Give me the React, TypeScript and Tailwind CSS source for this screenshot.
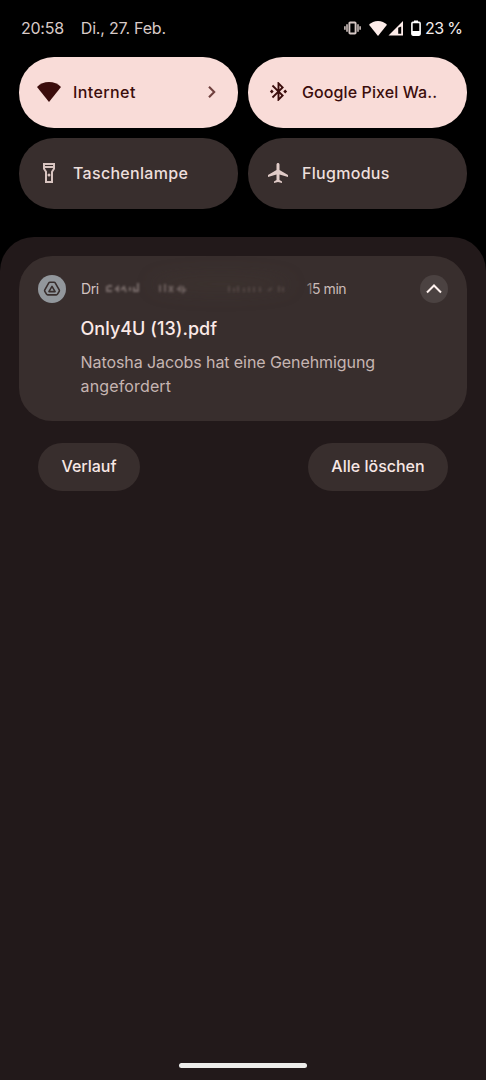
import type { ReactNode } from 'react';
import { MdAirplanemodeActive, MdBluetoothConnected, MdOutlineFlashlightOn } from 'react-icons/md';

function WifiIcon({ className }: { className?: string }) {
    return (
        <svg viewBox="0 0 24 20" className={className} fill="currentColor">
            <path d="M12 0C7.3 0 3.1 1.9 0 4.9L12 20 24 4.9C20.9 1.9 16.7 0 12 0z" />
        </svg>
    );
}

function StatusIcons() {
    return (
        <div className="flex items-center text-[#fdece9]">
            {/* vibrate */}
            <svg width="17" height="14" viewBox="0 0 17 14" fill="none" stroke="#d6c8c5" strokeWidth="1.5">
                <rect x="5.4" y="1.5" width="6.2" height="11" rx="0.8" strokeWidth="1.9" />
                <path d="M3 3.2v7.6M14 3.2v7.6M0.9 5.2v3.6M16.1 5.2v3.6" />
            </svg>
            <WifiIcon className="ml-[8px] h-[15px] w-[18px]" />
            {/* mobile signal */}
            <svg width="16" height="15" viewBox="0 0 16 15" className="ml-[1px]">
                <path d="M0.5 14.5L15 0V14.5z" fill="currentColor" />
                <path d="M10.2 6.8l3-1.4v7.3h-3z" fill="#000" />
            </svg>
            {/* battery */}
            <svg width="10" height="16" viewBox="0 0 10 16" className="ml-[7px]">
                <path d="M3 0.5h4v2H3z" fill="#fff" />
                <rect x="0.9" y="2.4" width="8.2" height="12.7" rx="1" fill="none" stroke="#fff" strokeWidth="1.6" />
                <path d="M1 11h8v4H1z" fill="#fff" />
            </svg>
            <span className="ml-[4px] w-[37px] text-[16px] leading-5 tracking-[-0.6px] whitespace-nowrap text-[#f5eeec]">23 %</span>
        </div>
    );
}

interface TileProps {
    icon: ReactNode;
    label: string;
    labelClass: string;
    active?: boolean;
    arrow?: boolean;
}

function Tile({ icon, label, labelClass, active, arrow }: TileProps) {
    return (
        <div className={`flex h-[71px] items-center rounded-[35px] pr-[21px] pb-px pl-[19px] ${active ? 'bg-[#f9dcd8] text-[#3b0d0c]' : 'bg-[#382e2d] text-[#eddfdc]'}`}>
            <span className="-ml-px flex w-6 justify-center pb-px">{icon}</span>
            <span className={`ml-[12px] flex-1 pb-px text-[16px] leading-5 font-medium whitespace-nowrap ${labelClass}`}>{label}</span>
            {arrow && (
                <svg width="10" height="14" viewBox="0 0 10 14" fill="none" stroke="#70413f" strokeWidth="2.1">
                    <path d="M2 1.8L7.2 7 2 12.2" />
                </svg>
            )}
        </div>
    );
}

// the account name in the header is smeared out
function SmearedName() {
    return (
        <svg width="226" height="36" viewBox="0 0 226 36" className="-ml-[3px] overflow-visible" fill="none">
            <defs>
                <filter id="smear" x="-5%" y="-50%" width="110%" height="200%">
                    <feGaussianBlur stdDeviation="0.9" />
                </filter>
                <filter id="haze" x="-30%" y="-150%" width="160%" height="400%">
                    <feGaussianBlur stdDeviation="9" />
                </filter>
            </defs>
            <ellipse cx="125" cy="13" rx="70" ry="9" fill="#423733" opacity="0.4" filter="url(#haze)" />
            <g filter="url(#smear)" strokeWidth="1.9" transform="translate(3 0)">
                <path d="M8 15v6M13 15h-4M9 20h4M16 19l3-3v5M22 19l3-3 2 5M31 16v4M35 16v4h3M39 21v-9" stroke="#a89996" opacity="0.6" />
                <path d="M61 14v7M66 13v8M70 15l4 6M74 15l-4 6M78 19l3-3v5M84 15v6l3-3" stroke="#a1928f" opacity="0.5" />
                <path d="M130 15v6M135 17v4M139 15v6M145 17v4M150 16v5M155 16v5M161 16v5M169 20l4-3M180 15v6M184 16v5" stroke="#80716d" opacity="0.35" />
            </g>
            <path d="M186 18h20" stroke="#302624" strokeWidth="11" opacity="0.35" filter="url(#smear)" />
        </svg>
    );
}

export default function App() {
    return (
        <div className="flex h-[1080px] w-[486px] flex-col overflow-hidden bg-black font-['Inter',sans-serif]">
            <header className="flex h-[57px] items-center justify-between pr-[24px] pb-px pl-[21px]">
                <div className="flex gap-[17px] pb-px text-[16px] leading-5 whitespace-nowrap text-[#d8cac7]">
                    <span className="tracking-[-0.25px]">20:58</span>
                    <span className="tracking-[-0.2px]">Di., 27. Feb.</span>
                </div>
                <StatusIcons />
            </header>

            <div className="grid grid-cols-2 gap-x-[10px] gap-y-[10px] px-[19px]">
                <Tile active arrow label="Internet" labelClass="tracking-[0.4px]" icon={<WifiIcon className="h-5 w-6" />} />
                <Tile active label="Google Pixel Wa.." labelClass="tracking-[0.1px]" icon={<MdBluetoothConnected size={23} />} />
                <Tile label="Taschenlampe" labelClass="tracking-[0.3px]" icon={<MdOutlineFlashlightOn size={24} className="text-[#d8c4c0]" />} />
                <Tile label="Flugmodus" labelClass="tracking-[0.3px]" icon={<MdAirplanemodeActive size={24} className="text-[#e0cbc7]" />} />
            </div>

            <main className="mt-[28px] flex flex-1 flex-col rounded-t-[34px] bg-[#22191a] px-[19px] pt-[19px]">
                <section className="h-[165px] rounded-[33px] bg-[#382e2d] pt-[15px] pr-[19px] pl-[19px]">
                    <div className="flex h-[36px] items-center">
                        <span className="flex size-[28px] items-center justify-center rounded-full bg-[#92979c]">
                            <svg width="18" height="18" viewBox="0 0 18 18" fill="none" stroke="#382e2d" strokeWidth="1.6" strokeLinejoin="round">
                                <path d="M7 2.2h4q.8 0 1.2.7l4 7q.4.7 0 1.4l-1.7 2.9q-.4.7-1.2.7H4.7q-.8 0-1.2-.7l-1.7-2.9q-.4-.7 0-1.4l4-7Q6.200 2.200 7 2.200z" />
                                <path d="M9 6.4l3.1 5.2H5.9z" />
                            </svg>
                        </span>
                        <span className="ml-[15px] pb-px text-[14px] leading-5 tracking-[-0.4px] text-[#d2c3c0]">Dri</span>
                        <SmearedName />
                        <span className="-ml-[15px] pb-px text-[14px] leading-5 tracking-[-0.45px] whitespace-nowrap text-[#cbbcb9]">
                            <span className="text-[#918481]">1</span>5 min
                        </span>
                        <span className="ml-auto flex size-[28px] items-center justify-center rounded-full bg-[#4b4241]">
                            <svg width="16" height="10" viewBox="0 0 16 10" fill="none" stroke="#fff2ef" strokeWidth="2">
                                <path d="M1 8.5l7-7 7 7" />
                            </svg>
                        </span>
                    </div>
                    <div className="pl-[42.5px]">
                        <h1 className="mt-[10px] text-[18px] leading-6 font-medium tracking-[0.03px] text-[#fbe9e6]">Only4U (13).pdf</h1>
                        <p className="mt-[10px] text-[16px] leading-[23.5px] tracking-[-0.08px] whitespace-nowrap text-[#c6b5b2]">
                            Natosha Jacobs hat eine Genehmigung
                            <br />
                            <span className="tracking-[0.15px]">angefordert</span>
                        </p>
                    </div>
                </section>

                <div className="mt-[22px] flex justify-between px-[19px] text-[16px] leading-5 font-medium text-[#f7e7e4]">
                    <button className="h-[48px] w-[102px] rounded-full bg-[#382e2d] pb-[2px]">Verlauf</button>
                    <button className="h-[48px] w-[140px] rounded-full bg-[#382e2d] pb-[2px]">Alle löschen</button>
                </div>

                <div className="mt-auto mb-[12px] h-[5px] w-[128px] self-center rounded-full bg-[#ededeb]" />
            </main>
        </div>
    );
}
